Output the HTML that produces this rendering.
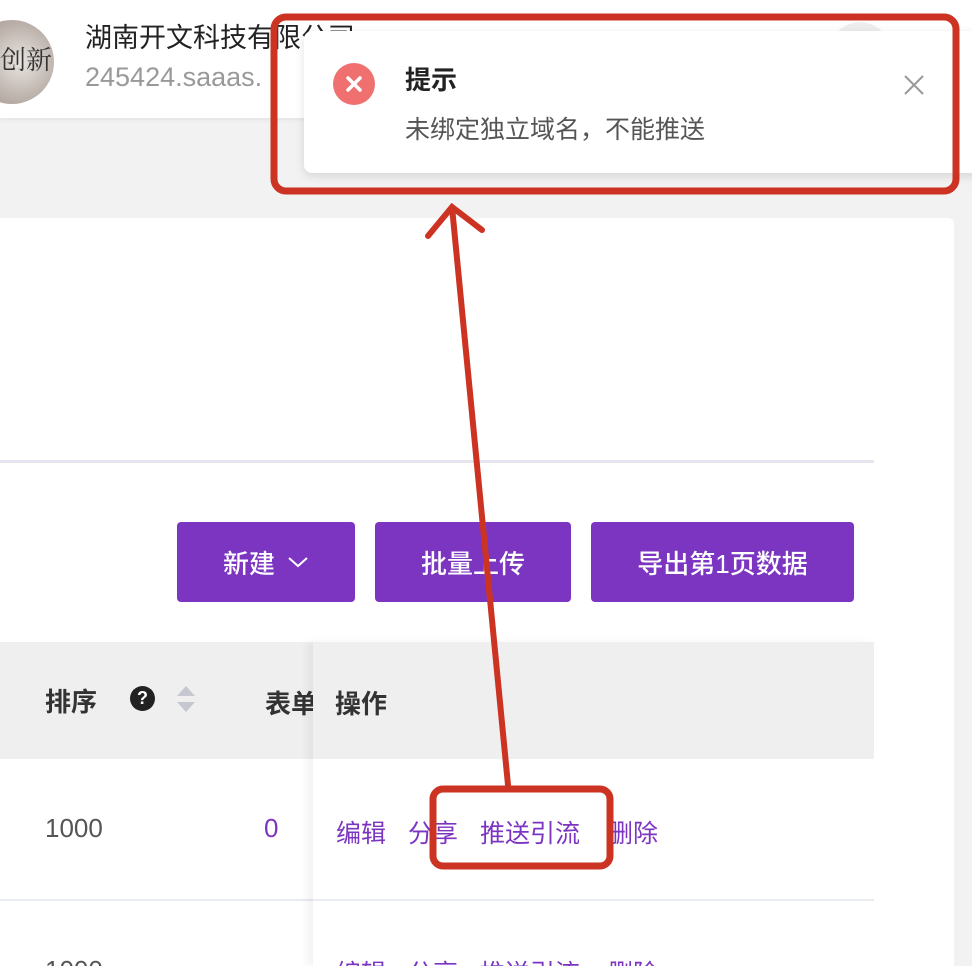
<!DOCTYPE html>
<html><head><meta charset="utf-8"><style>
html{width:972px;height:966px;overflow:hidden}
body{margin:0;width:972px;height:966px;overflow:hidden;background:#f2f2f2;font-family:"Liberation Sans","Noto Sans CJK SC",sans-serif;position:relative}
.a{position:absolute}
.hdr{left:0;top:0;width:972px;height:118px;background:#fff;box-shadow:0 2px 4px rgba(0,0,0,.06)}
.card{left:0;top:218px;width:954px;height:748px;background:#fff;border-radius:0 6px 0 0}
.btn{top:522px;height:80px;background:#7b35c1;color:#fff;font-size:26px;font-weight:500;border-radius:4px;display:flex;align-items:center;justify-content:center}
.th{left:0;top:642px;width:874px;height:117px;background:#efefef}
.t{font-size:26px;color:#333}
.p{color:#7b35c1;font-size:25px;white-space:nowrap}
.p span{position:absolute;top:0}
</style></head><body>
<div class="a hdr"></div>
<div class="a" style="left:-30px;top:20px;width:84px;height:84px;border-radius:50%;background:radial-gradient(circle at 60% 50%,#e8e4e0,#9a8a82);"></div>
<div class="a" style="left:0;top:40px;font-size:26px;color:#333;font-family:'Noto Serif CJK SC',serif">创新</div>
<div class="a t" style="left:85px;top:16px;font-size:27px;color:#222">湖南开文科技有限公司</div>
<div class="a" style="left:85px;top:62px;font-size:27px;color:#999">245424.saaas.</div>
<div class="a" style="left:830px;top:22px;width:60px;height:60px;border-radius:50%;background:#eee"></div>
<div class="a card"></div>
<div class="a" style="left:0;top:460px;width:874px;height:3px;background:#e6e4ee"></div>
<div class="a btn" style="left:177px;width:178px">新建 <svg width="22" height="14" style="margin-left:12px"><path d="M2 3l9 8 9-8" stroke="#fff" stroke-width="2" fill="none"/></svg></div>
<div class="a btn" style="left:375px;width:196px">批量上传</div>
<div class="a btn" style="left:591px;width:263px">导出第1页数据</div>
<div class="a th"></div>
<div class="a" style="left:0;top:899px;width:874px;height:2px;background:#e8ebf0"></div>
<div class="a t" style="left:45px;top:682px;font-weight:bold">排序</div>
<div class="a" style="left:130px;top:686px;width:25px;height:25px;border-radius:50%;background:#222;color:#fff;font-size:18px;font-weight:bold;text-align:center;line-height:25px">?</div>
<svg class="a" style="left:175px;top:685px" width="22" height="28"><path d="M11 1l9 10H2z" fill="#c5c8d0"/><path d="M11 27l9-10H2z" fill="#c5c8d0"/></svg>
<div class="a t" style="left:265px;top:684px;font-weight:bold">表单</div>
<div class="a" style="left:45px;top:813px;font-size:26px;color:#555">1000</div>
<div class="a" style="left:264px;top:813px;font-size:26px;color:#7b35c1">0</div>
<div class="a" style="left:45px;top:955px;font-size:26px;color:#555">1000</div>
<div class="a" style="left:313px;top:642px;width:561px;height:324px;background:#fff;box-shadow:-6px 0 8px rgba(0,0,0,.05)"></div>
<div class="a" style="left:313px;top:642px;width:561px;height:117px;background:#efefef"></div>
<div class="a" style="left:313px;top:899px;width:561px;height:2px;background:#e8ebf0"></div>
<div class="a t" style="left:335px;top:684px;font-weight:bold">操作</div>
<div class="a p" style="left:0;top:814px"><span style="left:336px">编辑</span><span style="left:408px">分享</span><span style="left:480px">推送引流</span><span style="left:608px">删除</span></div>
<div class="a p" style="left:0;top:954px"><span style="left:336px">编辑</span><span style="left:408px">分享</span><span style="left:480px">推送引流</span><span style="left:608px">删除</span></div>
<div class="a" style="left:304px;top:31px;width:680px;height:142px;background:#fff;border-radius:8px;box-shadow:0 3px 10px rgba(0,0,0,.12)"></div>
<div class="a" style="left:333px;top:63px;width:42px;height:42px;border-radius:50%;background:#f07070"></div>
<svg class="a" style="left:333px;top:63px" width="42" height="42"><path d="M15 15l12 12M27 15l-12 12" stroke="#fff" stroke-width="3.5" stroke-linecap="round"/></svg>
<div class="a" style="left:405px;top:60px;font-size:26px;font-weight:bold;color:#222">提示</div>
<div class="a" style="left:405px;top:110px;font-size:25px;color:#555">未绑定独立域名，不能推送</div>
<svg class="a" style="left:903px;top:74px" width="22" height="22"><path d="M2 2l18 18M20 2L2 20" stroke="#999" stroke-width="2"/></svg>
<svg class="a" style="left:0;top:0" width="972" height="966">
<rect x="274" y="17" width="682" height="174" rx="12" fill="none" stroke="#cc3322" stroke-width="7"/>
<rect x="433" y="789" width="177" height="77" rx="10" fill="none" stroke="#cc3322" stroke-width="7"/>
<path d="M508 785L452 207M428 236L452 207L482 230" fill="none" stroke="#cc3322" stroke-width="6" stroke-linecap="round"/>
</svg>
</body></html>
